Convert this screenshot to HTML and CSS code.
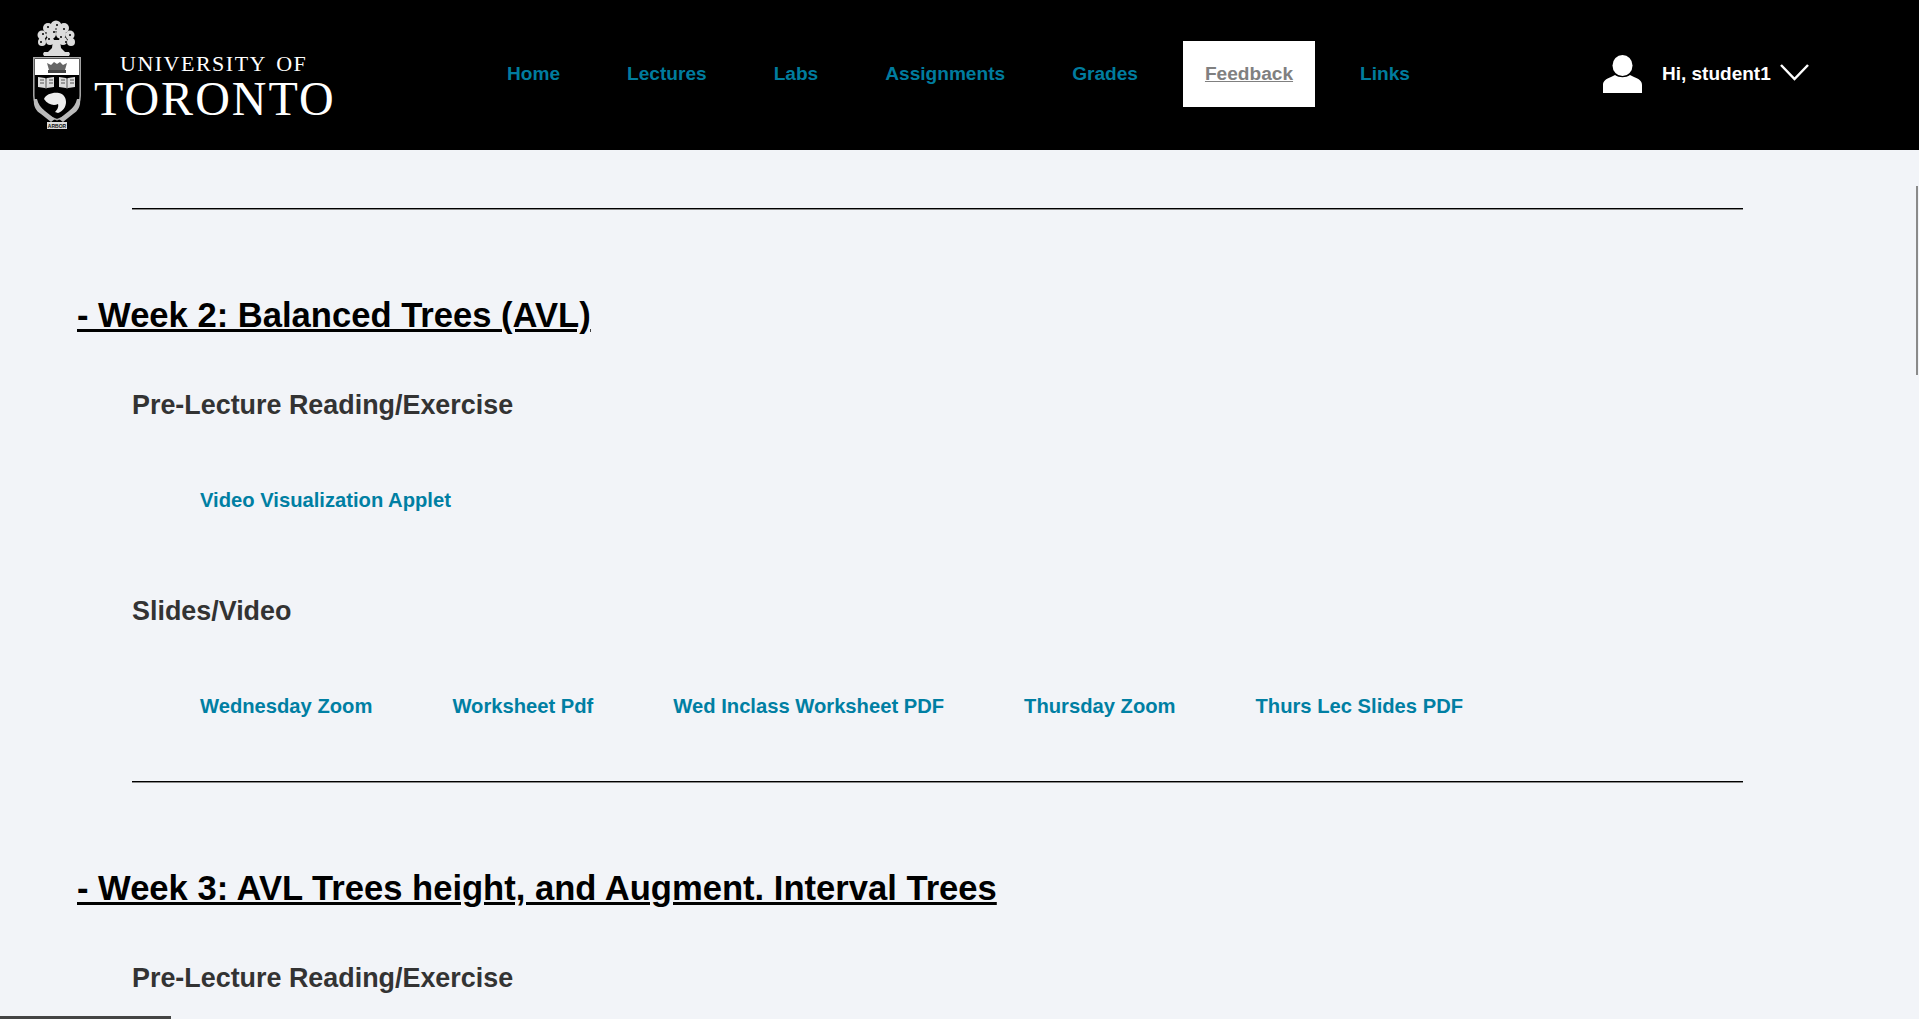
FILE: index.html
```html
<!DOCTYPE html>
<html lang="en">
<head>
<meta charset="UTF-8">
<meta name="viewport" content="width=device-width, initial-scale=1.0">
<title>Lectures</title>
<link rel="stylesheet" href="styles.css">
</head>
<body>

<header class="topbar">
    <a class="logo" href="#">
        <svg class="crest" width="48" height="110" viewBox="0 0 48 110">
            <!-- tree -->
            <g fill="#dcdcdc">
                <circle cx="23" cy="6" r="5.500"/><circle cx="15" cy="8" r="5"/><circle cx="31" cy="8" r="5"/>
                <circle cx="9" cy="15" r="4.500"/><circle cx="18" cy="14" r="5"/><circle cx="28" cy="14" r="5"/><circle cx="37" cy="15" r="4.500"/>
                <circle cx="9" cy="22" r="4"/><circle cx="17" cy="21" r="4"/><circle cx="30" cy="21" r="4"/><circle cx="38" cy="22" r="4"/>
                <path d="M20 20h7l1 8 4 4H15l4-4z"/>
                <path d="M11 32h25l1 2-1 2H11l-1-2z"/>
            </g>
            <g fill="#000">
                <circle cx="15" cy="7" r="1"/><circle cx="24" cy="5" r="1"/><circle cx="31" cy="9" r="1"/><circle cx="10" cy="14" r="1"/>
                <circle cx="21" cy="12" r="1"/><circle cx="37" cy="15" r="1"/><circle cx="16" cy="19" r="1"/><circle cx="28" cy="17" r="1"/>
                <circle cx="8" cy="22" r="1"/><circle cx="33" cy="22" r="1"/><circle cx="23" cy="9" r=".8"/><circle cx="13" cy="13" r=".8"/>
            </g>
            <!-- shield -->
            <path d="M.8 37.800h46.400v38q0 15-23.200 24-23.200-9-23.200-24z" fill="#000" stroke="#aaa" stroke-width="1.500"/>
            <rect x="2" y="39" width="44" height="16" fill="#fff"/>
            <!-- crown -->
            <path d="M14 43l4 2 3-3 3 2 3-2 3 3 4-2-2 7H16z" fill="#666"/>
            <rect x="15" y="50" width="18" height="3" fill="#444"/>
            <!-- books -->
            <path d="M5 57l7 1 1 1 1-1 7-1v10l-7 1-1 .5-1-.5-7-1z" fill="#ddd"/>
            <path d="M26 57l7 1 1 1 1-1 7-1v10l-7 1-1 .5-1-.5-7-1z" fill="#ddd"/>
            <path d="M13 59v9M34 59v9M7 60h4M7 63h4M16 60h4M16 63h4M28 60h4M28 63h4M37 60h4M37 63h4" stroke="#555" fill="none"/>
            <!-- beaver -->
            <path d="M11 79c2-5 9-7 15-6 5 1 7 5 7 9 0 5-3 9-8 11l-3-1c2-2 4-5 3-8-4 2-10 1-14-5z" fill="#eee"/>
            <!-- motto -->
            <path d="M1 79c-1 7 2 12 7 15l10 8 4-3-10-8c-4-3-7-7-8-12zM47 79c1 7-2 12-7 15l-10 8-4-3 10-8c4-3 7-7 8-12z" fill="#bbb"/>
            <rect x="14" y="102" width="20" height="7" fill="#ddd"/>
            <text class="crest-motto" x="24" y="107.500" text-anchor="middle">ARBOR</text>
        </svg>
        <span class="wordmark">
            <span class="wordmark-top">UNIVERSITY OF</span>
            <span class="wordmark-main">TORONTO</span>
        </span>
    </a>

    <nav class="mainnav">
        <a href="#">Home</a>
        <a href="#">Lectures</a>
        <a href="#">Labs</a>
        <a href="#">Assignments</a>
        <a href="#">Grades</a>
        <a href="#" class="current">Feedback</a>
        <a href="#">Links</a>
    </nav>

    <div class="usermenu">
        <svg width="39" height="38" viewBox="0 0 39 38">
            <ellipse cx="19.500" cy="10.500" rx="10" ry="10.500" fill="#fff"/>
            <path d="M0 38V30c0-4 3-6 8-8l4-2c4 3 11 3 15 0l4 2c5 2 8 4 8 8v8z" fill="#fff"/>
        </svg>
        <span class="username">Hi, student1</span>
        <svg class="chevron" width="29" height="17" viewBox="0 0 29 17"><path d="M1 1L14.500 15 28 1" fill="none" stroke="#fff" stroke-width="2.500"/></svg>
    </div>
</header>

<main class="content">
    <hr>

    <h2 class="week">- Week 2: Balanced Trees (AVL)</h2>
    <h3>Pre-Lecture Reading/Exercise</h3>
    <div class="links">
        <a href="#">Video Visualization Applet</a>
    </div>
    <h3>Slides/Video</h3>
    <div class="links">
        <a href="#">Wednesday Zoom</a>
        <a href="#">Worksheet Pdf</a>
        <a href="#">Wed Inclass Worksheet PDF</a>
        <a href="#">Thursday Zoom</a>
        <a href="#">Thurs Lec Slides PDF</a>
    </div>
    <hr>

    <h2 class="week">- Week 3: AVL Trees height, and Augment. Interval Trees</h2>
    <h3>Pre-Lecture Reading/Exercise</h3>
</main>

<!-- thin scrollbars drawn by the page -->
<div class="scroll-v"></div>
<div class="scroll-h"></div>

</body>
</html>
```

FILE: styles.css
```css
html, body {
    height: 100%;
}
body {
    margin: 0;
    overflow: hidden;
    background-color: #F2F4F8;
    font-family: 'Liberation Sans', Arial, sans-serif;
    color: #333333;
}
a {
    text-decoration: none;
}

/* Top bar */
.topbar {
    display: flex;
    align-items: center;
    box-sizing: border-box;
    height: 150px;
    padding-bottom: 2px;
    background-color: #000000;
}
.logo {
    display: flex;
    align-self: stretch;
    width: 485px;
    padding-left: 33px;
    box-sizing: border-box;
    color: #FFFFFF;
}
.crest {
    flex: none;
    margin-top: 20px;
}
.crest-motto {
    font-family: 'Liberation Sans', sans-serif;
    font-size: 5px;
    font-weight: bold;
    fill: #111111;
}
.wordmark {
    display: flex;
    flex-direction: column;
    margin: 52px 0 0 13px;
    font-family: 'Liberation Serif', serif;
}
.wordmark-top {
    margin-left: 26px;
    font-size: 22px;
    line-height: 24px;
    letter-spacing: 1.500px;
    word-spacing: 3px;
}
.wordmark-main {
    font-size: 48px;
    line-height: 45px;
    letter-spacing: 2px;
}
.mainnav {
    display: flex;
    align-items: center;
    width: 1118px;
}
.mainnav a {
    padding: 24px 22px;
    margin-right: 23px;
    font-size: 19.100px;
    font-weight: bold;
    line-height: 18px;
    color: #007C9E;
}
.mainnav a.current {
    background-color: #FFFFFF;
    color: #808080;
    text-decoration: underline;
}
.usermenu {
    display: flex;
    align-items: center;
    color: #FFFFFF;
}
.username {
    margin: 0 9px 0 20px;
    font-size: 19px;
    font-weight: bold;
}
.chevron {
    margin-top: -4px;
}

/* Lecture list */
.content {
    padding: 24px 176px 0 77px;
}
hr {
    margin: 34px 0 0 55px;
    border: none;
    border-top: 1px solid #000000;
    border-bottom: 1px solid #8A8A8A;
}
.week {
    margin: 0;
    padding-top: 85px;
    font-size: 34.600px;
    line-height: 40px;
    color: #000000;
    text-decoration: underline;
}
h3 {
    margin: 0 0 0 55px;
    padding-top: 55px;
    font-size: 26.900px;
    line-height: 31px;
}
.links {
    display: flex;
    gap: 80px;
    margin-left: 123px;
    padding: 67px 0 29px;
    font-size: 20.200px;
    font-weight: bold;
    line-height: 24px;
}
.links a {
    color: #007FA3;
}

/* Scrollbars */
.scroll-v {
    position: absolute;
    top: 186px;
    right: 1px;
    width: 2px;
    height: 189px;
    background-color: #8A8A8A;
}
.scroll-h {
    position: absolute;
    left: 0;
    bottom: 0;
    width: 171px;
    height: 3px;
    background-color: #444444;
}
```
